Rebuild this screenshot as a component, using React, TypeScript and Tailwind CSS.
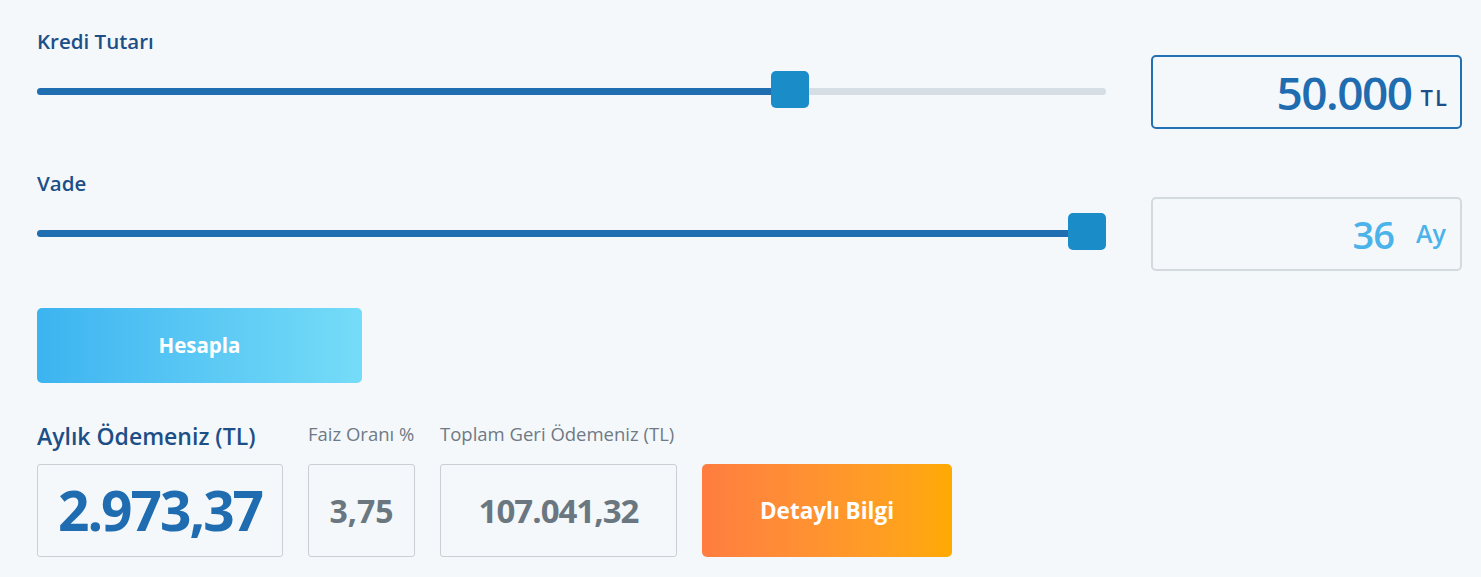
import { useState } from "react";

const font = { fontFamily: '"Open Sans", "Noto Sans", sans-serif' };

type SliderProps = {
  value: number;
  min: number;
  max: number;
  onChange: (v: number) => void;
};

function Slider({ value, min, max, onChange }: SliderProps) {
  const pct = (value - min) / (max - min);
  return (
    <div className="relative h-[74px] flex-1">
      {/* ray */}
      <div className="absolute left-0 right-0 top-[33px] h-[7px] rounded-full bg-[#d5dee4]" />
      <div
        className="absolute left-0 top-[33px] h-[7px] rounded-l-full bg-[#1f6eb2]"
        style={{ width: `calc(${pct} * (100% - 38px) + 19px)` }}
      />
      <button
        type="button"
        onClick={() => onChange(value)}
        className="absolute top-[16px] h-[37px] w-[38px] rounded-[5px] bg-[#1a8cc7]"
        style={{ left: `calc(${pct} * (100% - 38px))` }}
      />
    </div>
  );
}

export default function App() {
  const [amount, setAmount] = useState(50000);
  const [term, setTerm] = useState(36);

  return (
    <div className="min-h-screen w-full bg-[#f4f8fb] pl-[37px] pr-[19px] pt-[29px]" style={font}>
      {/* Kredi tutarı */}
      <div className="text-[20.5px] font-semibold leading-[24px] text-[#1c4f87]">Kredi Tutarı</div>
      <div className="mt-[2px] flex items-center">
        <Slider value={amount} min={500} max={70000} onChange={setAmount} />
        <div className="ml-[45px] flex h-[74px] w-[311px] items-center justify-end rounded-[5px] border-2 border-[#2170b3] pr-[11px]">
          <span className="text-[46px] font-semibold tracking-[-1.5px] text-[#1f6cb0]">
            {amount.toLocaleString("tr-TR")}
          </span>
          <span className="ml-[9px] mt-[10px] text-[22px] font-semibold tracking-[2px] text-[#1f4f8a]">TL</span>
        </div>
      </div>

      {/* Vade */}
      <div className="mt-[42px] text-[20.5px] font-semibold leading-[24px] text-[#1c4f87]">Vade</div>
      <div className="mt-[2px] flex items-center">
        <Slider value={term} min={3} max={36} onChange={setTerm} />
        <div className="ml-[45px] flex h-[74px] w-[311px] items-center justify-end rounded-[5px] border-2 border-[#d3dade] pr-[14px]">
          <span className="text-[38px] font-semibold tracking-[-1px] text-[#4bb3ea]">{term}</span>
          <span className="ml-[22px] text-[25px] font-semibold text-[#4bb3ea]">Ay</span>
        </div>
      </div>

      <button
        type="button"
        className="mt-[37px] h-[75px] w-[325px] rounded-[5px] bg-gradient-to-r from-[#3cb4f0] to-[#75dcf8] text-[20.5px] font-bold text-white"
      >
        Hesapla
      </button>

      {/* sonuçlar */}
      <div className="mt-[39px] flex items-end gap-[25px]">
        <div>
          <div className="mb-[14px] text-[23px] font-semibold leading-[28px] text-[#1c4f87]">Aylık Ödemeniz (TL)</div>
          <div className="flex h-[93px] w-[246px] items-center justify-center rounded-[3px] border border-[#c9cfd4]">
            <span className="text-[55px] font-bold tracking-[-2px] text-[#1f6cb0]">2.973,37</span>
          </div>
        </div>
        <div>
          <div className="mb-[19px] text-[18.5px] leading-[22px] text-[#6f7a84]">Faiz Oranı %</div>
          <div className="flex h-[93px] w-[107px] items-center justify-center rounded-[3px] border border-[#c9cfd4]">
            <span className="text-[32px] font-bold text-[#6b7780]">3,75</span>
          </div>
        </div>
        <div>
          <div className="mb-[19px] text-[18.5px] leading-[22px] text-[#6f7a84]">Toplam Geri Ödemeniz (TL)</div>
          <div className="flex h-[93px] w-[237px] items-center justify-center rounded-[3px] border border-[#c9cfd4]">
            <span className="text-[33px] font-bold tracking-[-1px] text-[#6b7780]">107.041,32</span>
          </div>
        </div>
        <button
          type="button"
          className="h-[93px] w-[250px] rounded-[5px] bg-gradient-to-r from-[#ff7d40] to-[#ffaa00] text-[22.5px] font-bold text-white"
        >
          Detaylı Bilgi
        </button>
      </div>
    </div>
  );
}
